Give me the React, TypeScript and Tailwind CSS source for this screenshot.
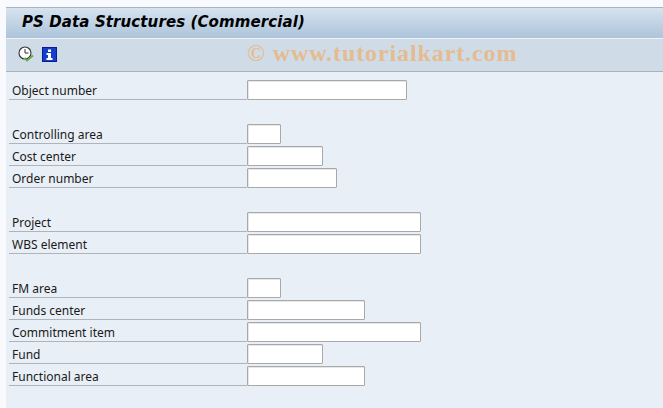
const rows: ({ label: string; width: string } | null)[] = [
	{ label: "Object number", width: "w-[160px]" },
	null,
	{ label: "Controlling area", width: "w-[34px]" },
	{ label: "Cost center", width: "w-[76px]" },
	{ label: "Order number", width: "w-[90px]" },
	null,
	{ label: "Project", width: "w-[174px]" },
	{ label: "WBS element", width: "w-[174px]" },
	null,
	{ label: "FM area", width: "w-[34px]" },
	{ label: "Funds center", width: "w-[118px]" },
	{ label: "Commitment item", width: "w-[174px]" },
	{ label: "Fund", width: "w-[76px]" },
	{ label: "Functional area", width: "w-[118px]" },
];

function ClockCheckIcon() {
	return (
		<svg width="17" height="17" viewBox="0 0 17 17" fill="none">
			<circle cx="7" cy="7" r="6" fill="#fff" stroke="#333" strokeWidth="1.1" />
			<path d="M7 3V7H10.5" stroke="#333" strokeWidth="1" />
			<path d="M6.5 12L9 14.5L15 9.5" stroke="#6aa84a" strokeWidth="2" />
		</svg>
	);
}

function InfoIcon() {
	return (
		<svg width="15" height="15" viewBox="0 0 15 15">
			<rect x="0" y="0" width="15" height="15" fill="#0a1a9a" />
			<rect x="1" y="1" width="13" height="13" fill="#1440c8" />
			<path d="M6 2.5H9V5H6ZM4.5 6H9V11H10.5V13H4.5V11H6V8H4.5Z" fill="#fff" />
		</svg>
	);
}

function FormRow({ label, width }: { label: string; width: string }) {
	return (
		<div className="flex h-[22px] items-start">
			<div className="ml-[3px] flex h-5 w-[238px] items-center border-b border-[#aeb4b8] pt-[2px] pl-[3px] text-[12px] leading-none text-[#1a1a1a]">
				{label}
			</div>
			<div
				className={`h-5 ${width} rounded-[1px] border border-[#a9a9a9] bg-white shadow-[inset_1px_1px_0_#e6e6e6]`}
			/>
		</div>
	);
}

export default function App() {
	return (
		<div className="h-[408px] w-[663px] overflow-hidden bg-[#f9fafd] pt-[7px] pl-[6px] font-['Noto_Sans',sans-serif]">
			<div className="flex h-[31px] items-center border-t border-[#a9b3bd] bg-gradient-to-b from-[#d6e3f0] to-[#adc4da] pb-[1px] pl-4">
				<h1 className="font-['DejaVu_Sans',sans-serif] text-[15px] leading-none font-bold tracking-[0.1px] text-black italic">
					PS Data Structures (Commercial)
				</h1>
			</div>
			<div className="relative flex h-[34px] items-center gap-[7px] border-t border-[#eef3f8] border-b border-b-[#a9b3bd] bg-[#cfdce8] pb-[2px] pl-3">
				<ClockCheckIcon />
				<InfoIcon />
				<span className="absolute top-0 left-[241px] font-['Liberation_Serif',serif] text-[24px] leading-[28px] font-bold tracking-[0.9px] whitespace-nowrap text-[#e5bb90]">
					© www.tutorialkart.com
				</span>
			</div>
			<div className="h-[336px] bg-[#e8eff6] pt-2">
				{rows.map((row, index) =>
					row ? (
						<FormRow key={index} label={row.label} width={row.width} />
					) : (
						<div key={index} className="h-[22px]" />
					),
				)}
			</div>
		</div>
	);
}
